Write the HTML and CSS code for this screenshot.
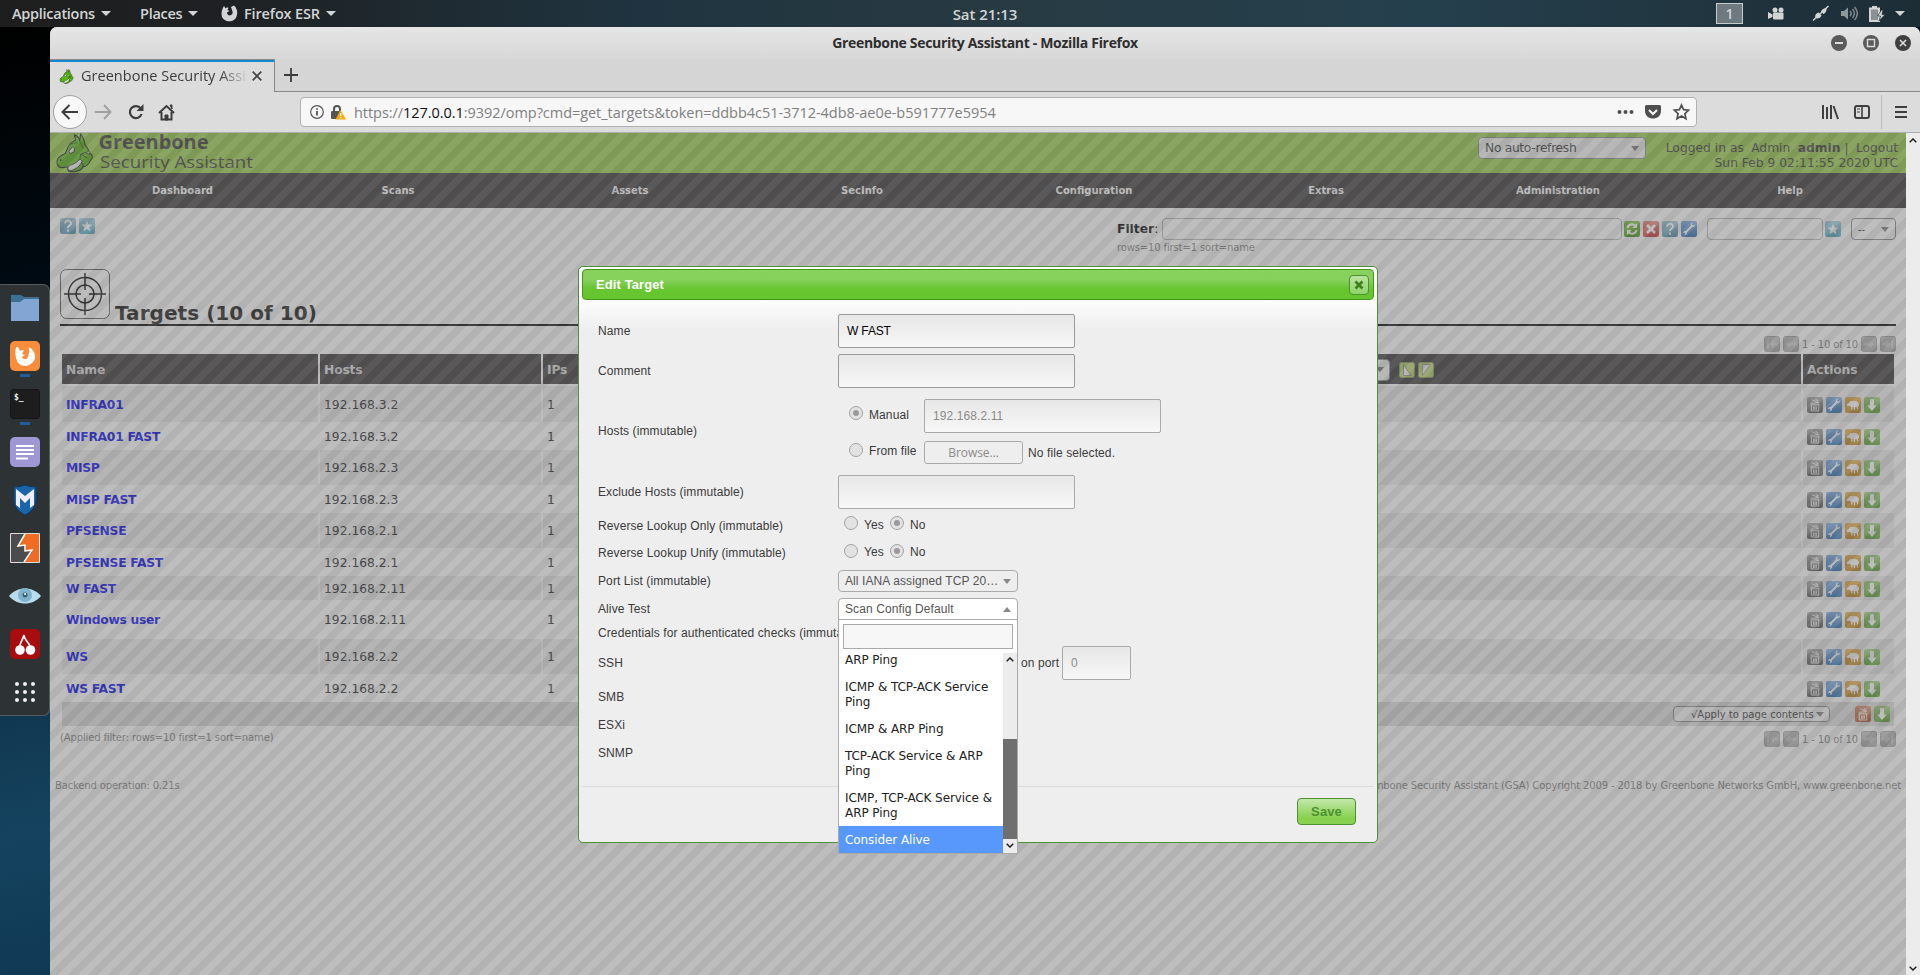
FILE: index.html
```html
<!DOCTYPE html>
<html lang="en">
<head>
<meta charset="utf-8">
<title>Greenbone Security Assistant</title>
<link rel="stylesheet" href="styles.css">
</head>
<body>
<svg class="defs" width="0" height="0">
  <defs>
    <linearGradient id="g-gray" x2="0" y2="1"><stop stop-color="#aaa"/><stop offset="1" stop-color="#555"/></linearGradient>
    <linearGradient id="g-light" x2="0" y2="1"><stop stop-color="#c4c4c4"/><stop offset="1" stop-color="#a8a8a8"/></linearGradient>
    <linearGradient id="g-blue" x2="0" y2="1"><stop stop-color="#7fb0e8"/><stop offset="1" stop-color="#2f6fb5"/></linearGradient>
    <linearGradient id="g-orange" x2="0" y2="1"><stop stop-color="#ecb04c"/><stop offset="1" stop-color="#c08218"/></linearGradient>
    <linearGradient id="g-green" x2="0" y2="1"><stop stop-color="#9fd47c"/><stop offset="1" stop-color="#56a02a"/></linearGradient>
    <linearGradient id="g-teal" x2="0" y2="1"><stop stop-color="#a5cbdc"/><stop offset="1" stop-color="#4f8faa"/></linearGradient>
    <linearGradient id="g-cyan" x2="0" y2="1"><stop stop-color="#a5d5e8"/><stop offset="1" stop-color="#4aa4c4"/></linearGradient>
    <linearGradient id="g-red" x2="0" y2="1"><stop stop-color="#f08a85"/><stop offset="1" stop-color="#d0302c"/></linearGradient>
    <linearGradient id="g-refresh" x2="0" y2="1"><stop stop-color="#7cc13c"/><stop offset="1" stop-color="#3f9410"/></linearGradient>
    <linearGradient id="g-rust" x2="0" y2="1"><stop stop-color="#e0926c"/><stop offset="1" stop-color="#b5502a"/></linearGradient>
    <g id="bin"><path d="M3.500 6.200l8.500-.4M5 2.800l6.500 2.700M8.500 2.300l3 1.600" stroke="#eee" stroke-width="1.100"/><path d="M3.500 7.800h9M4.300 8v6h7.400V8M6.600 9.500v3.600M8 9.500v3.600M9.400 9.500v3.600" fill="none" stroke="#eee" stroke-width="1"/></g>
    <path id="down" d="M6 2h4v6.500h2.600L8 14 3.400 8.500H6z" fill="#fff"/>
  </defs>
  <symbol id="i-trash" viewBox="0 0 16 16"><rect width="16" height="16" rx="2" fill="url(#g-gray)"/><use href="#bin"/></symbol>
  <symbol id="i-trashred" viewBox="0 0 16 16"><rect width="16" height="16" rx="2" fill="url(#g-rust)"/><use href="#bin"/></symbol>
  <symbol id="i-wrench" viewBox="0 0 16 16"><rect width="16" height="16" rx="2" fill="url(#g-blue)"/><path d="M4 12l7.500-7.500" stroke="#fff" stroke-width="1.800"/><path d="M13.800 3.600l-1.900 1.200-1-1 1.100-2C10.500 1.700 9.300 3 9.800 4.600l1.500 1.500c1.700.4 2.900-.9 2.500-2.500zM2 12.300l2-1 .8.800-1 2c1.500.1 2.500-1.300 2.100-2.500l-1.300-1.400C3.200 9.800 1.900 11 2 12.300z" fill="#fff"/></symbol>
  <symbol id="i-sheep" viewBox="0 0 16 16"><rect width="16" height="16" rx="2" fill="url(#g-orange)"/><path d="M1.500 7.500L4.500 5.200C5 4 6.500 4 7.200 4.200 8.500 3.300 10 3.600 11 4.200c1.500 0 2.300 1 2.300 2 1.200 1 .8 2.800-.3 3.200l.2 3h-1l-.5-2.200H10v1.200l.2 1.800H9L8.700 10H7.300l.2 2.500H6.300L6 9.800 4.500 8.700 2.300 9z" fill="#fff"/></symbol>
  <symbol id="i-down" viewBox="0 0 16 16"><rect width="16" height="16" rx="2" fill="url(#g-green)"/><use href="#down"/></symbol>
  <symbol id="i-help" viewBox="0 0 16 16"><rect width="16" height="16" rx="2" fill="url(#g-teal)"/><path d="M5 5.600C5 1.800 11.200 2 11 5.500 11 7.700 8 7.500 8 10M8 11.500v2.300" fill="none" stroke="#fff" stroke-width="1.900"/></symbol>
  <symbol id="i-star" viewBox="0 0 16 16"><rect width="16" height="16" rx="2" fill="url(#g-cyan)"/><path d="M8 2.500l1.500 3.900 4 .2-3.100 2.600 1.100 4L8 11l-3.500 2.200 1.100-4L2.500 6.600l4-.2z" fill="#fff"/></symbol>
  <symbol id="i-refresh" viewBox="0 0 16 16"><rect width="16" height="16" rx="2" fill="url(#g-refresh)"/><path d="M3.500 7c.5-3.500 5-4.800 7.500-2.500M12.500 9c-.5 3.500-5 4.800-7.500 2.500" fill="none" stroke="#fff" stroke-width="2"/><path d="M13 2v5H8.500zM3 14V9h4.500z" fill="#fff"/></symbol>
  <symbol id="i-x" viewBox="0 0 16 16"><rect width="16" height="16" rx="2" fill="url(#g-red)"/><path d="M4 4l8 8M12 4l-8 8" stroke="#fff" stroke-width="2.800"/></symbol>
  <symbol id="i-prev" viewBox="0 0 16 16"><rect x=".5" y=".5" width="15" height="15" rx="2" fill="url(#g-light)" stroke="#a4a4a4"/><path d="M2 8l5-4v2.500h6.500v3H7V12z" fill="#ccc"/></symbol>
  <symbol id="i-next" viewBox="0 0 16 16"><rect x=".5" y=".5" width="15" height="15" rx="2" fill="url(#g-light)" stroke="#a4a4a4"/><path d="M14 8L9 4v2.500H2.500v3H9V12z" fill="#ccc"/></symbol>
  <symbol id="i-first" viewBox="0 0 16 16"><rect x=".5" y=".5" width="15" height="15" rx="2" fill="url(#g-light)" stroke="#a4a4a4"/><path d="M3 4h2v8H3zM5.500 8l4.500-4v2.500h3.500v3H10V12z" fill="#ccc"/></symbol>
  <symbol id="i-last" viewBox="0 0 16 16"><rect x=".5" y=".5" width="15" height="15" rx="2" fill="url(#g-light)" stroke="#a4a4a4"/><path d="M11 4h2v8h-2zM10.500 8L6 4v2.500H2.500v3H6V12z" fill="#ccc"/></symbol>
  <symbol id="i-sorta" viewBox="0 0 16 16"><rect x=".5" y=".5" width="15" height="15" rx="2" fill="#b9d66e" stroke="#8a9a50"/><path d="M4.500 2.500v11h7.500z" fill="#eee" stroke="#777" stroke-width=".7"/></symbol>
  <symbol id="i-sortd" viewBox="0 0 16 16"><rect x=".5" y=".5" width="15" height="15" rx="2" fill="#b9d66e" stroke="#8a9a50"/><path d="M4.500 13.500v-11h7.500z" fill="#eee" stroke="#777" stroke-width=".7"/></symbol>
  <symbol id="i-dragon" viewBox="0 0 36 39"><path d="M1 29C0 24 5 22 9 20L12 13C14 9 17 8 19 7L18 2C21 3 23 5 23 8L24 1C27 5 28 8 28 11 31 14 32 17 32 20 36 20 36 24 34 26 32 31 29 33 26 33 25 37 16 39 12 37 11 35 12 33 12 33 8 34 1 35 1 29Z" fill="#57b512" stroke="#1c1c1c" stroke-width="1"/><path d="M12 13c3-3 6-4 9-3M23 8c2 3 3 5 3 7" fill="none" stroke="#2f7a08" stroke-width="1.200"/><path d="M32 20c-3 0-4-2-8 1 0 3-2 5 1 8 1 2 2 3 1 4M24 21c3 0 3 2 6 3" fill="none" stroke="#1c1c1c" stroke-width=".9"/><circle cx="31.500" cy="19" r="1.500" fill="#8c4" stroke="#1c1c1c" stroke-width=".7"/><path d="M12.500 18l3.500-4.500 2 1.500-.5 3.500-3.500 1.500z" fill="#eee" stroke="#1c1c1c" stroke-width=".8"/><path d="M11.500 34.500c0-3 3-3 6-4.500 2-1 4-3 6-4.500l2 2c-2 5-6 8-12 9.500z" fill="#eee" stroke="#1c1c1c" stroke-width=".8"/><circle cx="4.500" cy="26.500" r=".9" fill="#1c1c1c"/></symbol>
</svg>

<header class="topbar">
  <div class="tb-left">
    <span class="tb-item tb-apps">Applications<i class="caret"></i></span>
    <span class="tb-item tb-places">Places<i class="caret"></i></span>
    <span class="tb-item tb-ff"><svg width="17" height="17" viewBox="0 0 17 17"><path d="M3 1l1.500 2.200C5.500 2.500 6.500 2.300 7.500 2.800L6.500 5l2 1-2.500 1.500C6 9.500 7.500 10.800 9.500 10.300 11.500 9.800 12 8 11.300 6L10 2l3-1.500C17 4 17 10 14.500 13.500 11 17.500 5 17 2 13.500-.5 10 .5 5 3 1z" fill="#d3d5d5"/></svg>Firefox ESR<i class="caret"></i></span>
  </div>
  <span class="tb-clock">Sat 21:13</span>
  <div class="tb-right">
    <span class="ws">1</span>
    <svg class="tb-cam" width="17" height="13" viewBox="0 0 17 13" fill="#d3d5d5"><circle cx="7" cy="3" r="2.500"/><circle cx="13" cy="3" r="2.500"/><rect x="5" y="5.500" width="10.500" height="7" rx="1"/><path d="M0 5l4.500 2.500v2.500L0 12z"/></svg>
    <svg class="tb-pen" width="18" height="17" viewBox="0 0 18 17"><path d="M1 15.500L16.500 1" stroke="#d3d5d5" stroke-width="1.500"/><path d="M3.500 13c-1-3 1-5 3-5.500l3 3C8.500 13 6 14 3.500 13zM9 6.500C10 4 12.500 3 14.500 3.300 15 6 13 8.500 11.500 9z" fill="#d3d5d5"/></svg>
    <svg class="tb-vol" width="17" height="15" viewBox="0 0 17 15" fill="none" stroke="#7d878b" stroke-width="1.500"><path d="M0 5h3l4-3.500v12L3 10H0z" fill="#8e979a" stroke="none"/><path d="M9 5c1.500 1.500 1.500 3.500 0 5M11.500 3c2.500 3 2.500 6 0 9M13.500 1c3.500 4 3.500 9 0 13"/></svg>
    <svg class="tb-bat" width="16" height="16" viewBox="0 0 16 16"><rect x="1" y="2.500" width="9" height="12.500" fill="#8b9295" stroke="#d3d5d5" stroke-width="2"/><path d="M3 0h5v2H3z" fill="#d3d5d5"/><path d="M12.500 4l-4 6h3L10 15l6-6.500h-3L14 4z" fill="#d3d5d5" stroke="#22333b" stroke-width=".7"/></svg>
    <i class="caret"></i>
  </div>
</header>

<div class="desktop">
<aside class="dock">
  <div class="d-slot"><svg width="30" height="30" viewBox="0 0 30 30"><path d="M1 2h10l3 2h15v8H1z" fill="#3e6f94"/><path d="M1 9h9l4-3h15v22H1z" fill="#82a5d2"/></svg></div>
  <div class="d-slot run"><svg width="30" height="30" viewBox="0 0 30 30"><rect width="30" height="30" rx="5" fill="#f98d3c"/><path d="M8 6l2 4c1-1 3-1 4-1l-2 4 3 1-3 2c1 3 5 3 6 0l1-4c1-2-1-4 0-6 7 4 8 12 3 16-5 5-13 3-15-2-2-5-2-10-1-14z" fill="#fff"/></svg></div>
  <div class="d-slot run"><svg width="30" height="30" viewBox="0 0 30 30"><rect width="30" height="30" rx="5" fill="#1d1d1d" stroke="#111"/><text x="4" y="11" class="term">$_</text></svg></div>
  <div class="d-slot"><svg width="30" height="30" viewBox="0 0 30 30"><rect width="30" height="30" rx="5" fill="#9f97d4"/><path d="M6 9h18M6 13h18M6 17h18M6 21.500h12" stroke="#fff" stroke-width="2"/></svg></div>
  <div class="d-slot"><svg width="30" height="32" viewBox="0 0 30 32"><path d="M4 3c4 0 8-1 11-2 3 1 7 2 11 2v13c0 7-5 12-11 15C9 28 4 23 4 16z" fill="#1b64a8" stroke="#0d3860"/><path d="M6 21V5l9 7 9-7v16l-4 3V14l-5 5-5-5v10z" fill="#eef"/></svg></div>
  <div class="d-slot"><svg width="30" height="30" viewBox="0 0 30 30"><path d="M1 1h28v28H1z" fill="#4c4c4c"/><path d="M15 1h14v28H14l8-10-6-1v-6l-7 1z" fill="#ee6d22"/><path d="M15 1L8 13l7-1v6l7-1-8 12" fill="none" stroke="#fff" stroke-width="1.500"/><path d="M.5.500h29v29H.5z" fill="none" stroke="#ddd"/></svg></div>
  <div class="d-slot"><svg width="32" height="20" viewBox="0 0 32 20"><path d="M0 10C8 0 24 0 32 10 24 20 8 20 0 10z" fill="#b9dced"/><circle cx="16" cy="9" r="7" fill="#7fb3cd"/><circle cx="16" cy="9" r="2.500" fill="#3d6075"/><circle cx="16" cy="8" r="1" fill="#fff"/></svg></div>
  <div class="d-slot"><svg width="30" height="30" viewBox="0 0 30 30"><rect width="30" height="30" rx="5" fill="#a90c0e"/><circle cx="10" cy="21" r="4.800" fill="#fff"/><circle cx="20.500" cy="21" r="4.800" fill="#fff"/><path d="M10 17c0-4 3-6 4-11 0 5 4 6 6 11" fill="none" stroke="#fff" stroke-width="1.700"/></svg></div>
  <div class="d-slot"><svg width="22" height="22" viewBox="0 0 22 22" fill="#f2f2f2"><circle cx="3" cy="3" r="2"/><circle cx="11" cy="3" r="2"/><circle cx="19" cy="3" r="2"/><circle cx="3" cy="11" r="2"/><circle cx="11" cy="11" r="2"/><circle cx="19" cy="11" r="2"/><circle cx="3" cy="19" r="2"/><circle cx="11" cy="19" r="2"/><circle cx="19" cy="19" r="2"/></svg></div>
</aside>

<main class="window">
  <div class="titlebar">
    <span class="wintitle">Greenbone Security Assistant - Mozilla Firefox</span>
    <svg class="winbtns" width="80" height="16" viewBox="0 0 80 16"><circle cx="8" cy="8" r="8" fill="#5a5a5a"/><path d="M4 8h8" stroke="#ddd" stroke-width="2"/><circle cx="40" cy="8" r="8" fill="#5a5a5a"/><path d="M36.500 4.500h7v7h-7z" fill="none" stroke="#ddd" stroke-width="1.400"/><circle cx="72" cy="8" r="8" fill="#404040"/><path d="M69 5l6 6M75 5l-6 6" stroke="#ddd" stroke-width="1.600"/></svg>
  </div>
  <div class="tabs">
    <div class="tab"><svg width="15" height="15"><use href="#i-dragon"/></svg><span class="tabtext">Greenbone Security Assistant</span><svg class="tabx" width="10" height="10" viewBox="0 0 10 10"><path d="M.7.700l8.600 8.600M9.300.700L.7 9.300" stroke="#444" stroke-width="1.700"/></svg></div>
    <div class="newtab"><svg width="14" height="14" viewBox="0 0 14 14"><path d="M7 0v14M0 7h14" stroke="#3c3c3c" stroke-width="1.800"/></svg></div>
  </div>
  <div class="toolbar">
    <div class="back"><svg width="18" height="16" viewBox="0 0 18 16" fill="none" stroke="#3c3c3c" stroke-width="2"><path d="M17 8H2M8.500 1L1.500 8l7 7"/></svg></div>
    <svg class="fwd" width="17" height="16" viewBox="0 0 17 16" fill="none" stroke="#a0a0a0" stroke-width="2"><path d="M0 8h15M9 1l6.500 7L9 15"/></svg>
    <svg class="rel" width="16" height="16" viewBox="0 0 16 16"><path d="M12.800 4.600A6 6 0 1 0 13.600 10" fill="none" stroke="#3c3c3c" stroke-width="2.200"/><path d="M15.500 0v7H8.500z" fill="#3c3c3c"/></svg>
    <svg class="home" width="17" height="17" viewBox="0 0 17 17"><path d="M1 9l7.500-7L16 9M3.500 8v7.500h10V8" fill="none" stroke="#3c3c3c" stroke-width="2"/><path d="M7 16v-5h3v5zM12 1h2v4z" fill="#3c3c3c" stroke="#3c3c3c"/></svg>
    <div class="url">
      <svg width="14" height="14" viewBox="0 0 14 14" fill="none" stroke="#555"><circle cx="7" cy="7" r="6.300" stroke-width="1.200"/><path d="M7 6v4.500M7 3.200v1.600" stroke-width="1.800"/></svg>
      <svg class="lock" width="15" height="15" viewBox="0 0 15 15"><path d="M3 6V4c0-4 6-4 6 0v2" fill="none" stroke="#555" stroke-width="2"/><rect x="0" y="6" width="9" height="8" rx="1" fill="#555"/><path d="M9.500 5L15 14.500H4.500z" fill="#fca50c"/><path d="M9.700 8v3M9.700 12v1.200" stroke="#fff" stroke-width="1.300"/></svg>
      <span class="urltext">https://<b>127.0.0.1</b>:9392/omp?cmd=get_targets&amp;token=ddbb4c51-3712-4db8-ae0e-b591777e5954</span>
      <svg class="urlend" width="73" height="18" viewBox="0 0 73 18"><g fill="#4f4f4f"><circle cx="2.500" cy="9" r="2"/><circle cx="8.500" cy="9" r="2"/><circle cx="14.500" cy="9" r="2"/><path d="M28 3.500Q28 2 29.500 2h13Q44 2 44 3.500V8c0 10-16 10-16 0z"/></g><path d="M32 7l4 4 4-4" fill="none" stroke="#f6f6f6" stroke-width="2"/><path d="M64.500 2l2.100 4.700 5 .5-3.700 3.500 1.100 5.100-4.500-2.700L60 15.800l1.100-5.100-3.700-3.500 5-.5z" fill="none" stroke="#4f4f4f" stroke-width="1.700"/></svg>
    </div>
    <svg class="tools" width="86" height="34" viewBox="0 0 86 34"><g fill="none" stroke="#3f3f3f" stroke-width="2"><path d="M1 10v14M5 12v12M9 10v14M11.500 11l4.500 13"/><rect x="33" y="11" width="14" height="12" rx="2"/><path d="M40 11v12" stroke-width="1.600"/><path d="M35 14h3M35 17h3" stroke-width="1"/><path d="M73 12h12M73 17h12M73 22h12"/></g><path d="M59.500 0v34" stroke="#bbb"/></svg>
  </div>

  <div class="viewport">
    <div class="page">
      <div class="gsa-head">
        <svg class="gsa-logo" width="210" height="40"><svg x="6" y="0" width="37" height="40"><use href="#i-dragon"/></svg><text x="48.500" y="16" class="logo1" textLength="110" lengthAdjust="spacingAndGlyphs">Greenbone</text><text x="50" y="35" class="logo2" textLength="153" lengthAdjust="spacingAndGlyphs">Security Assistant</text></svg>
        <div class="auto sel"><span>No auto-refresh</span><i class="arr"></i></div>
        <div class="login"><div class="logline"><span>Logged in as</span><span>Admin</span><span><b>admin</b> |</span><span>Logout</span></div><div>Sun Feb 9 02:11:55 2020 UTC</div></div>
      </div>
      <nav class="menu"><span class="dash">Dashboard</span><span>Scans</span><span>Assets</span><span>SecInfo</span><span>Configuration</span><span>Extras</span><span>Administration</span><span>Help</span></nav>
      <div class="filterbar">
        <div class="icons"><svg><use href="#i-help"/></svg><svg><use href="#i-star"/></svg></div>
        <div class="filter">
          <div class="frow"><span class="flabel"><b>Filter</b>:</span><div class="box f1"></div><div class="icons ficons"><svg><use href="#i-refresh"/></svg><svg><use href="#i-x"/></svg><svg><use href="#i-help"/></svg><svg><use href="#i-wrench"/></svg></div><div class="box f2"></div><div class="icons"><svg><use href="#i-star"/></svg></div><div class="sel f3"><span>--</span><i class="arr"></i></div></div>
          <div class="fsub">rows=10 first=1 sort=name</div>
        </div>
      </div>
      <div class="heading">
        <svg width="50" height="50" viewBox="0 0 50 50" fill="none"><rect x=".5" y=".5" width="49" height="49" rx="6" stroke="#555"/><g stroke="#000" stroke-width="1.500"><circle cx="25" cy="25" r="16.500"/><circle cx="25" cy="25" r="9"/><path d="M25 4v17M25 29v17M4 25h17M29 25h17"/></g></svg>
        <h1>Targets (10 of 10)</h1>
      </div>
      <div class="pager"><svg><use href="#i-first"/></svg><svg><use href="#i-prev"/></svg><span>1 - 10 of 10</span><svg><use href="#i-next"/></svg><svg><use href="#i-last"/></svg></div>
      <table class="targets">
        <colgroup><col class="c1"><col class="c2"><col class="c3"><col class="c4"></colgroup>
        <tr class="th"><th>Name</th><th>Hosts</th><th class="wide"><div class="thc"><span>IPs</span><div class="thtools"><div class="sel"><i class="arr"></i></div><svg><use href="#i-sorta"/></svg><svg><use href="#i-sortd"/></svg></div></div></th><th>Actions</th></tr>
        <tr class="h37 odd first"><td>INFRA01</td><td>192.168.3.2</td><td>1</td><td><div class="icons"><svg><use href="#i-trash"/></svg><svg><use href="#i-wrench"/></svg><svg><use href="#i-sheep"/></svg><svg><use href="#i-down"/></svg></div></td></tr>
        <tr class="h28"><td>INFRA01 FAST</td><td>192.168.3.2</td><td>1</td><td><div class="icons"><svg><use href="#i-trash"/></svg><svg><use href="#i-wrench"/></svg><svg><use href="#i-sheep"/></svg><svg><use href="#i-down"/></svg></div></td></tr>
        <tr class="h35 odd"><td>MISP</td><td>192.168.2.3</td><td>1</td><td><div class="icons"><svg><use href="#i-trash"/></svg><svg><use href="#i-wrench"/></svg><svg><use href="#i-sheep"/></svg><svg><use href="#i-down"/></svg></div></td></tr>
        <tr class="h28"><td>MISP FAST</td><td>192.168.2.3</td><td>1</td><td><div class="icons"><svg><use href="#i-trash"/></svg><svg><use href="#i-wrench"/></svg><svg><use href="#i-sheep"/></svg><svg><use href="#i-down"/></svg></div></td></tr>
        <tr class="h35 odd"><td>PFSENSE</td><td>192.168.2.1</td><td>1</td><td><div class="icons"><svg><use href="#i-trash"/></svg><svg><use href="#i-wrench"/></svg><svg><use href="#i-sheep"/></svg><svg><use href="#i-down"/></svg></div></td></tr>
        <tr class="h28"><td>PFSENSE FAST</td><td>192.168.2.1</td><td>1</td><td><div class="icons"><svg><use href="#i-trash"/></svg><svg><use href="#i-wrench"/></svg><svg><use href="#i-sheep"/></svg><svg><use href="#i-down"/></svg></div></td></tr>
        <tr class="h24 odd"><td>W FAST</td><td>192.168.2.11</td><td>1</td><td><div class="icons"><svg><use href="#i-trash"/></svg><svg><use href="#i-wrench"/></svg><svg><use href="#i-sheep"/></svg><svg><use href="#i-down"/></svg></div></td></tr>
        <tr class="h39"><td>Windows user</td><td>192.168.2.11</td><td>1</td><td><div class="icons"><svg><use href="#i-trash"/></svg><svg><use href="#i-wrench"/></svg><svg><use href="#i-sheep"/></svg><svg><use href="#i-down"/></svg></div></td></tr>
        <tr class="h35 odd"><td>WS</td><td>192.168.2.2</td><td>1</td><td><div class="icons"><svg><use href="#i-trash"/></svg><svg><use href="#i-wrench"/></svg><svg><use href="#i-sheep"/></svg><svg><use href="#i-down"/></svg></div></td></tr>
        <tr class="h28"><td>WS FAST</td><td>192.168.2.2</td><td>1</td><td><div class="icons"><svg><use href="#i-trash"/></svg><svg><use href="#i-wrench"/></svg><svg><use href="#i-sheep"/></svg><svg><use href="#i-down"/></svg></div></td></tr>
        <tr class="tfoot"><td colspan="4"><div class="bulk"><div class="sel apply"><span>√Apply to page contents</span><i class="arr"></i></div><div class="icons"><svg><use href="#i-trashred"/></svg><svg><use href="#i-down"/></svg></div></div></td></tr>
      </table>
      <div class="under"><span>(Applied filter: rows=10 first=1 sort=name)</span><div class="pager"><svg><use href="#i-first"/></svg><svg><use href="#i-prev"/></svg><span>1 - 10 of 10</span><svg><use href="#i-next"/></svg><svg><use href="#i-last"/></svg></div></div>
      <footer class="foot"><span>Backend operation: 0.21s</span><span>Greenbone Security Assistant (GSA) Copyright 2009 - 2018 by Greenbone Networks GmbH, www.greenbone.net</span></footer>
      <div class="overlay"></div>
    </div>
    <div class="scroll"><svg width="8" height="5" viewBox="0 0 8 5"><path d="M.7 4.300L4 1l3.300 3.300" fill="none" stroke="#222" stroke-width="1.500"/></svg><svg width="8" height="5" viewBox="0 0 8 5"><path d="M.7.700L4 4 7.300.700" fill="none" stroke="#222" stroke-width="1.500"/></svg></div>
  </div>
</main>

<section class="dialog">
  <div class="dtitle"><span>Edit Target</span><span class="close"><svg width="10" height="10" viewBox="0 0 10 10"><path d="M1.500 1.500l7 7M8.500 1.500l-7 7" stroke="#3f7f1c" stroke-width="2.700"/></svg></span></div>
  <div class="dbody">
    <div class="r r40"><label>Name</label><div class="in name">W FAST</div></div>
    <div class="r r40"><label>Comment</label><div class="in"></div></div>
    <div class="r r80"><label>Hosts (immutable)</label>
      <div class="hosts">
        <div class="hrow"><i class="radio on up3"></i><span class="hl">Manual</span><div class="in dis">192.168.2.11</div></div>
        <div class="hrow h23"><i class="radio up3"></i><span class="hl">From file</span><div class="browse">Browse…</div><span>No file selected.</span></div>
      </div></div>
    <div class="r r41"><label>Exclude Hosts (immutable)</label><div class="in dis"></div></div>
    <div class="r r28"><label>Reverse Lookup Only (immutable)</label><div class="yn"><i class="radio"></i><span>Yes</span><i class="radio on"></i><span>No</span></div></div>
    <div class="r r27 unify"><label>Reverse Lookup Unify (immutable)</label><div class="yn"><i class="radio"></i><span>Yes</span><i class="radio on"></i><span>No</span></div></div>
    <div class="r r28"><label>Port List (immutable)</label><div class="dsel grad"><span>All IANA assigned TCP 20…</span><i class="arr"></i></div></div>
    <div class="r r28"><label>Alive Test</label><div class="dsel open"><span>Scan Config Default</span><i class="arr upw"></i></div></div>
    <div class="r r20"><label class="long">Credentials for authenticated checks (immutable)</label></div>
    <div class="r r40"><label>SSH</label><span class="onport">on port</span><div class="in dis small">0</div></div>
    <div class="r r28"><label>SMB</label></div>
    <div class="r r28"><label>ESXi</label></div>
    <div class="r r28"><label>SNMP</label></div>
  </div>
  <div class="dfoot"><span class="save">Save</span></div>
  <div class="drop">
    <div class="search"></div>
    <div class="list">
      <div class="opts"><div>ARP Ping</div><div>ICMP &amp; TCP-ACK Service Ping</div><div>ICMP &amp; ARP Ping</div><div>TCP-ACK Service &amp; ARP Ping</div><div>ICMP, TCP-ACK Service &amp; ARP Ping</div><div class="hl-opt">Consider Alive</div></div>
      <div class="lscroll"><svg width="8" height="5" viewBox="0 0 8 5"><path d="M.7 4.300L4 1l3.300 3.300" fill="none" stroke="#222" stroke-width="1.500"/></svg><div class="thumb"></div><svg width="8" height="5" viewBox="0 0 8 5"><path d="M.7.700L4 4 7.300.700" fill="none" stroke="#222" stroke-width="1.500"/></svg></div>
    </div>
  </div>
</section>
</div>
</body>
</html>
```
FILE: styles.css
```css
* { box-sizing: border-box; }
body { margin: 0; width: 1920px; height: 975px; overflow: hidden; background: #000; font-family: "DejaVu Sans", sans-serif; }
.defs { position: absolute; }
svg { display: block; flex: none; }
b { font-weight: bold; }

/* desktop panel */
.topbar { height: 27px; display: grid; grid-template-columns: 1fr auto 1fr; align-items: center; background: linear-gradient(90deg, #1e1e1e 0, #1e2123 230px, #1f3440 640px, #273a42 970px, #25404d 1420px, #1d2d36 1920px); color: #d3d5d5; font: 600 14.500px "Open Sans", sans-serif; }
.tb-left, .tb-right { display: flex; align-items: center; }
.tb-item { display: flex; align-items: center; white-space: nowrap; }
.caret { border: 5px solid transparent; border-top-color: #d3d5d5; border-bottom: 0; }
.tb-apps { margin-left: 12px; width: 128px; gap: 6px; }
.tb-apps, .tb-places { letter-spacing: -.28px; }
.tb-places { width: 81px; gap: 6px; }
.tb-ff { gap: 6px; letter-spacing: -.15px; }
.tb-clock { padding-left: 50px; font-size: 15px; letter-spacing: -.05px; }
.tb-right { justify-content: flex-end; padding-right: 15px; }
.ws { width: 27px; height: 21px; border: 1px solid #c8cccd; background: #6f7980; display: grid; place-items: center; margin-right: 25px; font-size: 14px; }
.tb-cam { margin-right: 27px; }
.tb-pen { margin-right: 11px; }
.tb-vol { margin-right: 11px; }
.tb-bat { margin-right: 10px; }

.desktop { position: relative; display: flex; align-items: flex-start; height: 948px; background: linear-gradient(170deg, #000 0, #000a12 250px, #0d2c42 560px, #15435f 800px, #0f3853 948px); }
.dock { width: 50px; height: 432px; margin-top: 257px; background: #2d3335; border: 1px solid #555d60; border-left: 0; border-radius: 0 7px 7px 0; display: flex; flex-direction: column; flex: none; }
.d-slot { height: 48px; flex: none; display: flex; flex-direction: column; align-items: center; justify-content: center; position: relative; }
.d-slot:first-child { margin-top: -1px; }
.d-slot.run::after { content: ""; position: absolute; bottom: 3px; width: 10px; height: 3px; background: #215d9c; }
.term { font: bold 8px "DejaVu Sans Mono", monospace; fill: #eee; }

/* browser window */
.window { width: 1870px; height: 948px; border-radius: 7px 7px 0 0; overflow: hidden; background: #d9d9d9; }
.titlebar { height: 32px; display: grid; grid-template-columns: 1fr auto 1fr; align-items: center; background: linear-gradient(#e6e6e6, #d7d7d7); }
.wintitle { grid-column: 2; padding-bottom: 1px; font: bold 14px "Open Sans", sans-serif; letter-spacing: -.32px; color: #2e2e2e; white-space: nowrap; }
.winbtns { justify-self: end; margin-right: 9px; }
.tabs { height: 33px; display: flex; background: #d5d5d5; }
.tab { width: 225px; border-top: 1px solid #8b8b8b; border-right: 1px solid #888; box-shadow: inset 0 2px #1787cf; background: #dcdcdc; display: flex; align-items: center; padding-left: 9px; }
.tabtext { margin: 0 0 2px 7px; width: 166px; overflow: hidden; white-space: nowrap; font: 14.500px "Open Sans", sans-serif; color: #3c3c3c; letter-spacing: .02px; -webkit-mask-image: linear-gradient(90deg, #000 138px, transparent 168px); }
.tabx { margin-left: 5px; }
.newtab { flex: 1; border-bottom: 1px solid #888; padding: 9px 0 0 9px; }
.toolbar { height: 41px; display: flex; align-items: center; background: #dcdcdc; border-bottom: 1px solid #adadad; }
.back { width: 34px; height: 34px; margin-left: 3px; border-radius: 50%; background: #f8f8f8; border: 1px solid #a0a0a0; display: grid; place-items: center; }
.fwd { margin-left: 8px; }
.rel { margin-left: 16px; }
.home { margin-left: 14px; }
.url { margin-left: 125px; width: 1397px; height: 30px; background: #f7f7f7; border: 1px solid #b0b0b0; border-radius: 4px; display: flex; align-items: center; padding-left: 9px; font: 14.500px "Open Sans", sans-serif; color: #808080; }
.url b { color: #111; font-weight: normal; }
.lock { margin-left: 7px; }
.urltext { margin-left: 8px; white-space: nowrap; letter-spacing: -.05px; }
.urlend { margin-left: auto; margin-right: 6px; }
.tools { margin-left: 125px; }
.viewport { display: flex; height: 842px; }
.scroll { width: 14px; background: #ececec; display: flex; flex-direction: column; justify-content: space-between; align-items: center; padding: 5px 0 4px; }

/* page */
.page { position: relative; width: 1856px; background: #fff; color: #000; font-size: 12.300px; }
.overlay { position: absolute; inset: 0; opacity: .5; background: repeating-linear-gradient(135deg, #656565 0 7.071px, #7b7b7b 7.071px 14.142px); }
.gsa-head { height: 40px; display: flex; background: #99ce48; }
.logo1 { font: bold 19px "Open Sans", sans-serif; fill: #393637; }
.logo2 { font: 17px "Open Sans", sans-serif; fill: #393637; }
.sel { border: 1px solid #888; border-radius: 4px; background: #f4f4f4; display: flex; align-items: center; justify-content: space-between; color: #333; }
.arr { border: 4px solid transparent; border-top: 5px solid #777; border-bottom: 0; flex: none; }
.auto { width: 168px; height: 22px; margin: 4px 0 0 1218px; padding: 0 6px; letter-spacing: -.32px; }
.login { margin: 8px 8px 0 auto; text-align: right; line-height: 15px; color: #393637; white-space: nowrap; }
.logline { display: flex; gap: 7.300px; justify-content: flex-end; }
.menu { height: 35px; display: grid; grid-template-columns: repeat(8, 232px); align-items: center; justify-items: center; background: #393637; color: #fff; font-weight: bold; font-size: 10px; }
.menu .dash { padding-left: 33px; }
.icons, .pager { display: flex; gap: 3px; align-items: center; }
.icons svg, .pager svg, .thtools svg { width: 16px; height: 16px; }
.filterbar { display: flex; justify-content: space-between; align-items: flex-start; padding: 10px 10px 0; height: 61px; }
.filter { width: 779px; }
.frow { display: flex; align-items: center; height: 22px; }
.flabel { width: 45px; }
.box { height: 22px; border: 1px solid #b4b4b4; border-radius: 4px; }
.f1 { width: 460px; margin-right: 2px; }
.ficons { margin-right: 10px; }
.f2 { width: 116px; margin-right: 2px; }
.f3 { width: 45px; height: 22px; margin-left: 10px; background: none; padding: 0 6px; font-size: 10px; }
.fsub, .pager, .under, .foot { font-size: 10px; letter-spacing: -.14px; color: #7f7f7f; }
.fsub { margin-top: 2px; }
.heading { height: 57px; margin: 0 10px; display: flex; gap: 5px; border-bottom: 2px solid #000; }
h1 { margin: 32px 0 0; font-size: 20.100px; line-height: 24px; color: #111; }
.pager { height: 16px; }
.page > .pager { justify-content: flex-end; margin: 10px 10px 2px; }
.targets { width: 1832px; margin-left: 12px; border-collapse: collapse; table-layout: fixed; }
.targets td, .targets th { padding: 1px 0 0 4px; text-align: left; height: inherit; }
.targets td + td, .targets th + th { border-left: 2px solid #fff; }
.c1 { width: 257px; } .c2 { width: 223px; } .c3 { width: 1260px; }
.th { height: 31px; background: #393637; color: #ddd; letter-spacing: -.15px; }
.thc { display: flex; justify-content: space-between; align-items: center; }
.thtools { display: flex; align-items: center; gap: 3px; margin-right: 367px; height: 22px; }
.thtools .sel { width: 30px; height: 22px; justify-content: flex-end; padding-right: 5px; margin-right: 6px; }
.h24 { height: 24px; } .h28 { height: 28px; } .h35 { height: 35px; } .h37 { height: 37px; } .h39 { height: 39px; }
.odd { background: #eee; }
.targets .first td { border-top: 2px solid #fff; padding-top: 2px; }
.targets td:first-child { font-weight: bold; color: #0000f0; letter-spacing: -.28px; }
.targets td { color: #222; }
.tfoot { height: 24px; background: #ddd; }
.targets .tfoot td { font-weight: normal; color: #222; padding-top: 0; letter-spacing: 0; }
.bulk { display: flex; justify-content: flex-end; align-items: center; padding-right: 4px; gap: 25px; }
.apply { width: 157px; height: 16px; font-size: 10px; padding: 0 5px 0 17px; white-space: nowrap; }
.under { display: flex; justify-content: space-between; align-items: flex-start; margin: 5px 10px 0; height: 48px; line-height: 13px; }
.foot { display: flex; justify-content: space-between; padding: 0 5px; line-height: 13px; }

/* dialog */
.dialog { position: absolute; left: 578px; top: 239px; width: 800px; height: 577px; background: linear-gradient(#fff 30px, #eee 62px); border: 1px solid #4d9130; border-radius: 5px; padding: 2px 3px; font: 12px "Liberation Sans", Arial, sans-serif; letter-spacing: .1px; color: #3a3a3a; }
.dtitle { height: 31px; border: 1px solid #459522; border-radius: 4px; background: linear-gradient(#87d15d 0, #86d05b 35%, #67c530 65%, #66c52e); color: #fff; font-weight: bold; font-size: 13px; display: flex; align-items: center; justify-content: space-between; padding: 0 4px 0 13px; }
.close { width: 20px; height: 20px; border: 1px solid #4d9130; border-radius: 4px; background: linear-gradient(#b9e4a1, #8ed367); display: grid; place-items: center; }
.dbody { padding: 11px 0 0 16px; height: 486px; }
.r { display: flex; align-items: center; }
.r label { width: 240px; white-space: nowrap; flex: none; }
.r20 { height: 20px; } .r27 { height: 27px; } .r28 { height: 28px; } .r40 { height: 40px; } .r41 { height: 41px; } .r80 { height: 80px; }
.in { width: 237px; height: 34px; border: 1px solid #999; border-radius: 2px; background: linear-gradient(#e7e7e7, #f7f7f7); color: #000; padding-left: 8px; display: flex; align-items: center; }
.in.name { letter-spacing: -.15px; }
.in.dis { color: #8a8a8a; border-color: #aaa; }
.in.small { width: 69px; margin-left: 3px; }
.hosts { display: flex; flex-direction: column; gap: 8px; padding-left: 11px; margin-top: 1px; }
.hrow { display: flex; align-items: center; height: 34px; }
.h23 { height: 23px; }
.hl { width: 55px; margin-bottom: 3px; }
.radio { width: 14px; height: 14px; border: 1px solid #a2a2a2; border-radius: 50%; background: #e2e2e2; margin-right: 6px; display: grid; place-items: center; flex: none; }
.radio.on::after { content: ""; width: 6px; height: 6px; border-radius: 50%; background: #999; }
.up3 { margin-bottom: 6px; }
.browse { width: 99px; height: 23px; border: 1px solid #aaa; border-radius: 3px; color: #8a8a8a; font: 12px "Open Sans", sans-serif; letter-spacing: -.1px; display: grid; place-items: center; margin-right: 5px; }
.yn { display: flex; align-items: center; padding-left: 6px; margin-bottom: 3px; }
.yn .radio { margin-bottom: 3px; }
.yn span { margin-right: 6px; }
.unify label { margin-bottom: 1px; }
.dsel { width: 180px; height: 22px; border: 1px solid #aaa; border-radius: 4px; display: flex; align-items: center; justify-content: space-between; padding: 0 6px; color: #555; white-space: nowrap; }
.grad { background: #eee; }
.dsel.open { background: #fff; border-radius: 4px 4px 0 0; }
.dsel .arr { border-top-color: #888; }
.dsel .arr.upw { border: 4px solid transparent; border-top: 0; border-bottom: 5px solid #888; }
.onport { margin-left: 183px; }
.dfoot { border-top: 1px solid #ddd; display: flex; justify-content: flex-end; padding: 11px 18px 0 0; }
.save { width: 59px; height: 27px; border: 1px solid #4d9130; border-radius: 4px; background: linear-gradient(#c2e8ac, #88d24f 75%); color: #4d9130; font-weight: bold; font-size: 13px; display: grid; place-items: center; }
.drop { position: absolute; left: 259px; top: 352px; width: 180px; height: 235px; border: 1px solid #aaa; background: #fff; color: #222; }
.search { height: 25px; margin: 4px; border: 1px solid #aaa; background: #f7f7f7; }
.list { height: 200px; display: flex; overflow: hidden; }
.opts { flex: 1; margin-top: -7px; font: 12px/15px "DejaVu Sans", sans-serif; letter-spacing: -.08px; }
.opts div { padding: 7px 0 5px 6px; }
.opts .hl-opt { background: #5897fb; color: #fff; }
.lscroll { width: 14px; background: #ececec; display: flex; flex-direction: column; align-items: center; padding-top: 4px; }
.thumb { width: 14px; height: 100px; margin: 77px 0 4px; background: #6f6f6f; }
```
